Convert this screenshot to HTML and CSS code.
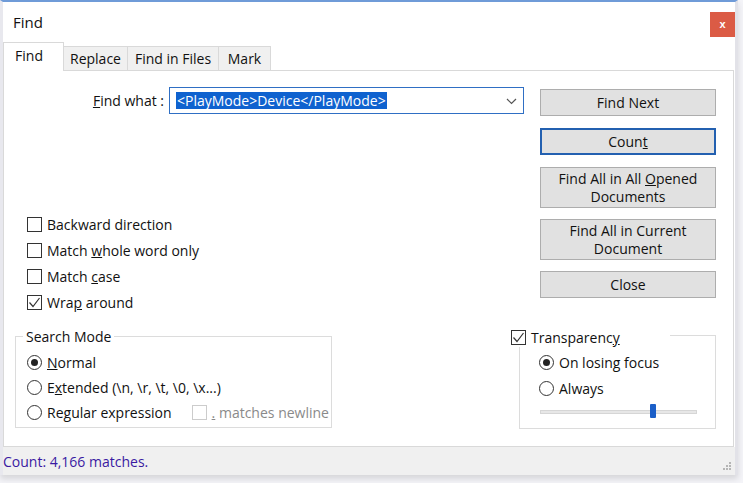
FILE: index.html
```html
<!DOCTYPE html>
<html lang="en">
  <head>
    <meta charset="UTF-8" />
    <title>Find</title>
    <link rel="stylesheet" href="styles.css">
  </head>
  <body>
    <div class="window">
      <!-- title bar -->
      <div class="titlebar">
        <span class="title">Find</span>
        <span class="close">x</span>
      </div>

      <!-- tabs -->
      <ul class="tabs">
        <li class="on">Find</li>
        <li>Replace</li>
        <li>Find in Files</li>
        <li>Mark</li>
      </ul>

      <div class="panel">
        <div class="top">
          <div class="left">
            <div class="findrow">
              <label class="lbl"><span><u>F</u>ind what :</span></label>
              <div class="combo">
                <span class="sel">&lt;PlayMode&gt;Device&lt;/PlayMode&gt;</span>
                <svg class="chev" width="11" height="7" viewBox="0 0 11 7"><path d="M1 1 L5.5 5.5 L10 1" fill="none" stroke="#555" stroke-width="1.2"/></svg>
              </div>
            </div>

            <ul class="checks">
              <li><span class="box"></span><span>Backward direction</span></li>
              <li><span class="box"></span><span>Match <u>w</u>hole word only</span></li>
              <li><span class="box"></span><span>Match <u>c</u>ase</span></li>
              <li><span class="box on"><svg width="13" height="13" viewBox="0 0 13 13"><path d="M1.5 6.5 L5 10.5 L11.5 2" fill="none" stroke="#333" stroke-width="1.2"/></svg></span><span>Wra<u>p</u> around</span></li>
            </ul>
          </div>

          <div class="btns">
            <span class="btn h1"><span>Find Next</span></span>
            <span class="btn h1 focus"><span>Coun<u>t</u></span></span>
            <span class="btn h2"><span>Find All in All <u>O</u>pened<br>Documents</span></span>
            <span class="btn h2"><span>Find All in Current<br>Document</span></span>
            <span class="btn h1"><span>Close</span></span>
          </div>
        </div>

        <div class="bottom">
          <!-- search mode -->
          <div class="group mode">
            <span class="legend">Search Mode</span>
            <ul class="radios">
              <li><span class="radio on"></span><span><u>N</u>ormal</span></li>
              <li><span class="radio"></span><span>E<u>x</u>tended (\n, \r, \t, \0, \x...)</span></li>
              <li><span class="radio"></span><span>Re<u>g</u>ular expression</span>
                <span class="box off"></span><span class="dim"><u>.</u> matches newline</span></li>
            </ul>
          </div>

          <!-- transparency -->
          <div class="group trans">
            <span class="legend"><span class="box on"><svg width="13" height="13" viewBox="0 0 13 13"><path d="M1.5 6.5 L5 10.5 L11.5 2" fill="none" stroke="#333" stroke-width="1.2"/></svg></span><span>Transparenc<u>y</u></span></span>
            <ul class="radios">
              <li><span class="radio on"></span><span>On losing focus</span></li>
              <li><span class="radio"></span><span>Always</span></li>
            </ul>
            <div class="slider"><span class="thumb"></span></div>
          </div>
        </div>
      </div>

      <!-- status bar -->
      <div class="status">
        <span class="msg">Count: 4,166 matches.</span>
        <svg class="grip" width="10" height="10" viewBox="0 0 10 10" fill="#b5b5b5">
          <rect x="7" y="1" width="2" height="2"/>
          <rect x="4" y="4" width="2" height="2"/><rect x="7" y="4" width="2" height="2"/>
          <rect x="1" y="7" width="2" height="2"/><rect x="4" y="7" width="2" height="2"/><rect x="7" y="7" width="2" height="2"/>
        </svg>
      </div>
    </div>
  </body>
</html>
```

FILE: styles.css
```css
html, body, ul{
  margin: 0;
  padding: 0;
}

ul{
  list-style: none;
}

body{
  width: 743px;
  height: 483px;
  overflow: hidden;
  background-color: #f4f4f8;
  font: 14px "Open Sans", "Liberation Sans", sans-serif;
  color: #111;
}

/* window frame */
.window{
  display: flex;
  flex-direction: column;
  width: 732px;
  border-top: 2px solid #6f9bd8;
  border-left: 3px solid #e8e8ee;
  border-right: 3px solid #e2e2e8;
  background-color: #fff;
  box-shadow: 0 4px 6px rgba(0,0,0,.12);
}

.titlebar{
  display: flex;
  align-items: flex-start;
  height: 41px;
}

.title{
  padding: 10px 0 0 10px;
  font-size: 15px;
  line-height: 20px;
}

.close{
  margin: 10px 0 0 auto;
  width: 25px;
  height: 25px;
  background-color: #db5b45;
  color: #fff;
  font: bold 11px/24px "Liberation Sans", sans-serif;
  text-align: center;
}

/* tabs */
.tabs{
  display: flex;
  align-items: flex-end;
  height: 27px;
}

.tabs>li{
  height: 23px;
  border: 1px solid #d9d9d9;
  border-bottom: none;
  margin-left: -1px;
  background-color: #f0f0f0;
  line-height: 23px;
  text-align: center;
}

.tabs>li:nth-child(2){ width: 63px; }
.tabs>li:nth-child(3){ width: 90px; }
.tabs>li:nth-child(4){ width: 51px; }

.tabs>li.on{
  position: relative;
  z-index: 1;
  width: 50px;
  height: 28px;
  margin: 0 0 -1px 0;
  padding-right: 9px;
  background-color: #fff;
  line-height: 26px;
}

/* tab body */
.panel{
  width: 729px;
  height: 375px;
  border: 1px solid #d9d9d9;
}

.top{
  display: flex;
  padding-top: 16px;
}

.left{
  padding-left: 23px;
}

.findrow{
  display: flex;
  align-items: center;
}

.lbl{
  width: 137px;
  margin-right: 5px;
  text-align: right;
}

.combo{
  display: flex;
  align-items: center;
  width: 353px;
  height: 25px;
  border: 1px solid #2f6fc4;
}

.sel{
  margin-left: 6px;
  padding: 0 1px;
  height: 17px;
  line-height: 17px;
  background-color: #0f62cf;
  color: #fff;
}

.chev{
  margin: 1px 6px 0 auto;
}

.checks{
  margin-top: 97px;
}

.checks>li, .radios>li{
  display: flex;
  align-items: center;
  height: 26px;
  white-space: nowrap;
}

.box, .radio{
  display: inline-block;
  flex: none;
  width: 13px;
  height: 13px;
  margin-right: 5px;
  border: 1px solid #333;
  background-color: #fff;
}

.box svg{
  display: block;
}

.radio{
  position: relative;
  border-radius: 50%;
}

.radio.on::after{
  content: '';
  position: absolute;
  top: 3px;
  left: 3px;
  width: 7px;
  height: 7px;
  border-radius: 50%;
  background-color: #222;
}

.box.off{
  margin-left: 20px;
  border-color: #ccc;
}

.dim{
  color: #8a8a8a;
}

/* buttons */
.btns{
  display: flex;
  flex-direction: column;
  gap: 11px;
  width: 176px;
  margin: 2px 0 0 16px;
}

.btn{
  display: flex;
  align-items: center;
  justify-content: center;
  border: 1px solid #adadad;
  background-color: #e1e1e1;
  text-align: center;
  line-height: 18px;
}

.btn.h1{ height: 25px; }
.btn.h2{ height: 39px; }

.btn.focus{
  height: 23px;
  border: 2px solid #2360b0;
  margin: 1px 0;
}

/* lower groups */
.bottom{
  display: flex;
  align-items: flex-start;
  margin-top: 21px;
  padding: 0 17px 0 11px;
}

.group{
  position: relative;
  border: 1px solid #dcdcdc;
}

.legend{
  position: absolute;
  display: flex;
  align-items: center;
  height: 20px;
  background-color: #fff;
}

.mode{
  width: 315px;
  height: 90px;
}

.mode .legend{
  top: -11px;
  left: 7px;
  padding: 0 3px;
}

.mode .radios{
  padding: 13px 0 0 11px;
}

.mode .radios>li{
  height: 25px;
}

.trans{
  width: 195px;
  height: 92px;
  margin: -1px 0 0 auto;
}

.trans .legend{
  top: -9px;
  left: -9px;
  width: 159px;
}

.trans .radios{
  padding: 13px 0 0 19px;
}

.slider{
  position: relative;
  width: 155px;
  height: 2px;
  margin: 9px 0 0 20px;
  border: 1px solid #d6d6d6;
  background-color: #e7e7e7;
}

.thumb{
  position: absolute;
  top: -7px;
  left: 109px;
  width: 6px;
  height: 14px;
  border-radius: 1px;
  background-color: #1b5fc8;
}

/* status bar */
.status{
  display: flex;
  align-items: center;
  height: 28px;
  background-color: #f0f0f0;
}

.msg{
  color: #3a1aa2;
}

.grip{
  align-self: flex-end;
  margin: 0 3px 4px auto;
}
```
